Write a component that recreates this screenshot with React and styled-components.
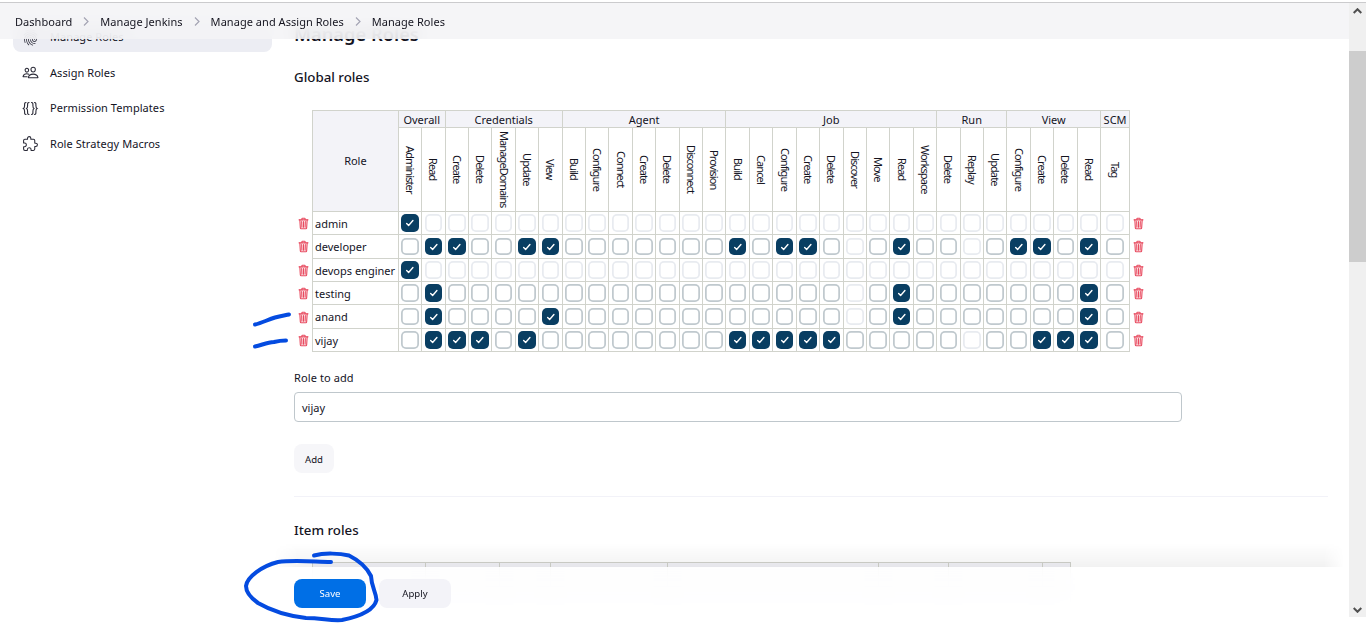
import React from 'react';
import styled, { createGlobalStyle } from 'styled-components';
import {
  IoFingerPrintOutline,
  IoPeopleOutline,
  IoExtensionPuzzleOutline,
  IoTrashOutline,
} from 'react-icons/io5';

const GlobalStyle = createGlobalStyle`
  * { box-sizing: border-box; }
  html, body { margin: 0; padding: 0; background: #fff; }
  body {
    font-family: 'Noto Sans', 'Open Sans', sans-serif;
    font-size: 11px;
    color: #14141f;
    overflow: hidden;
  }
`;

const Screen = styled.div`
  position: relative;
  width: 1366px;
  height: 623px;
  overflow: hidden;
  background: #fff;
`;

const Viewport = styled.div`
  display: flex;
  height: 617px;
  overflow: hidden;
`;

const Header = styled.header`
  position: absolute;
  z-index: 2;
  top: 0;
  left: 0;
  width: 1349px;
  height: 39px;
  padding: 5px 0 0 15px;
  display: flex;
  align-items: center;
  background: rgba(243, 243, 246, 0.86);
  backdrop-filter: blur(8px);
`;

const TopEdge = styled.div`
  position: absolute;
  z-index: 3;
  top: 0;
  left: 0;
  width: 100%;
  height: 3px;
  background: #fff;
  border-bottom: 1px solid #cbcbcd;
`;

const Crumb = styled.span`
  line-height: 16px;
  letter-spacing: 0.04px;
  white-space: nowrap;
`;

const Chevron = styled.svg`
  width: 6px;
  height: 9px;
  margin: -1px 11px 0;
  fill: none;
  stroke: #a4a4b4;
  stroke-width: 1.2;
`;

const Sidebar = styled.nav`
  flex: none;
  width: 294px;
  padding: 20px 22px 0 13px;
  display: flex;
  flex-direction: column;
  gap: 3.6px;
`;

const SideItem = styled.a`
  display: flex;
  align-items: center;
  height: 32px;
  padding: 2px 0 0 9px;
  gap: 11px;
  border-radius: 8px;
  background: ${(p) => (p.$active ? '#ecedf3' : 'transparent')};
  line-height: 16px;
  letter-spacing: 0.06px;

  svg { width: 17px; height: 17px; color: #2b2b38; flex: none; }
`;

const Content = styled.main`
  flex: none;
  width: 1034px;
`;

const PageTitle = styled.h1`
  margin: 0;
  padding-top: 21px;
  height: 66px;
  font-size: 18.3px;
  line-height: 26px;
  font-weight: 600;
`;

const SectionTitle = styled.h2`
  margin: 0;
  font-size: 13.3px;
  line-height: 22px;
  font-weight: 500;
`;

const RoleGrid = styled.div`
  display: grid;
  grid-template-columns: 18px 85.8px repeat(30, 23.41px) 29.2px 18px;
  grid-template-rows: 17px 83.8px repeat(5, 23.41px) 24.2px;
  margin-top: 22px;
`;

const Cell = styled.div`
  display: flex;
  align-items: center;
  justify-content: center;
  border-left: 1px solid #d1d3cc;
  border-top: 1px solid #d1d3cc;
  background: ${(p) => (p.$head ? '#f3f3f8' : 'transparent')};
  grid-column: ${(p) => p.$col || 'auto'};
  grid-row: ${(p) => p.$row || 'auto'};
  border-bottom: ${(p) => (p.$last ? '1px solid #d1d3cc' : 'none')};
  line-height: 14px;
  white-space: nowrap;
  min-width: 0;
  min-height: 0;
`;

const GroupCell = styled(Cell)`
  padding-top: 2px;
`;

const NameCell = styled(Cell)`
  justify-content: flex-start;
  padding: 1.500px 0 0 2px;
`;

const BoxCell = styled(Cell)`
  align-items: flex-start;
  padding-top: 2.4px;
`;

const VerticalLabel = styled.span`
  writing-mode: vertical-rl;
  letter-spacing: -0.9px;
  line-height: 14px;
`;

const TrashCell = styled.div`
  display: flex;
  align-items: center;
  justify-content: center;
  grid-column: ${(p) => p.$col};
  grid-row: ${(p) => p.$row};
  border-left: ${(p) => (p.$edge ? '1px solid #d1d3cc' : 'none')};
  padding-top: 2px;
  svg { width: 13px; height: 13px; color: #e84a5f; }
  svg * { stroke-width: 44px; }
`;

const RightEdge = styled.div`
  grid-column: 34;
  grid-row: 1 / 3;
  border-left: 1px solid #d1d3cc;
`;

const Checkbox = styled.span`
  display: block;
  width: 17.6px;
  height: 17.6px;
  border-radius: 5px;
  background: ${(p) => (p.$on ? '#093e62' : '#fff')};
  box-shadow: ${(p) =>
    p.$on ? 'none' : `inset 0 0 0 1.75px ${p.$dim ? '#e8ebf0' : '#c0c9ce'}`};
  svg { display: block; width: 100%; height: 100%; }
`;

const FieldLabel = styled.label`
  display: block;
  margin-top: 18px;
  line-height: 16px;
  letter-spacing: 0.1px;
`;

const Field = styled.div`
  width: 888px;
  height: 30px;
  margin-top: 6px;
  padding: 1px 0 0 7px;
  border: 1px solid #bfc7cc;
  border-radius: 4px;
  display: flex;
  align-items: center;
`;

const Button = styled.button`
  width: ${(p) => p.$w};
  height: 28.5px;
  padding: ${(p) => (p.$soft ? '2px' : '1px')} 0 0;
  border: 0;
  border-radius: 8px;
  font: 9.6px 'Noto Sans', sans-serif;
  background: ${(p) => (p.$primary ? '#006fe6' : p.$soft ? '#f6f6f9' : '#f3f3f8')};
  color: ${(p) => (p.$primary ? '#fff' : '#14141f')};
`;

const Divider = styled.hr`
  margin: 23px 0 22px;
  border: 0;
  height: 1px;
  background: #f2f2f8;
`;

const AddRow = styled.div`
  margin-top: 22px;
  height: 29px;
`;

const ItemGrid = styled.div`
  display: grid;
  grid-template-columns: 113px 74px 51px 117px 211px 70px 94px 28px;
  width: 759px;
  height: 40px;
  margin: 21px 0 0 18px;
  border-right: 1px solid #d1d3cc;
`;

const BottomBar = styled.footer`
  position: absolute;
  z-index: 2;
  left: 278px;
  top: 567px;
  width: 1071px;
  height: 50px;
  padding: 12px 16px;
  display: flex;
  gap: 13px;
  background: rgba(255, 255, 255, 0.85);
  backdrop-filter: blur(10px);
`;

const BarShadow = styled.div`
  position: absolute;
  z-index: 1;
  left: 274px;
  top: 543px;
  width: 1070px;
  height: 24px;
  background: linear-gradient(to bottom, rgba(0, 0, 0, 0), rgba(0, 0, 0, 0.05));
  mask-image: linear-gradient(to right, transparent, #000 24px, #000 1050px, transparent);
`;

const Scrollbar = styled.div`
  position: absolute;
  z-index: 2;
  top: 3px;
  right: 0;
  width: 17px;
  height: 614px;
  padding: 5px 0 4px;
  display: flex;
  flex-direction: column;
  justify-content: space-between;
  align-items: center;
  background: #f0f0f0;
  svg { width: 9px; height: 6px; fill: none; stroke: #505050; stroke-width: 2; }
`;

const Thumb = styled.div`
  width: 17px;
  height: 211px;
  margin: 37px 0 auto;
  background: #cdcdcd;
`;

const Ink = styled.svg`
  position: absolute;
  z-index: 4;
  left: 0;
  top: 0;
  width: 400px;
  height: 623px;
  fill: none;
  stroke: #044be0;
  stroke-width: 4;
  stroke-linecap: round;
  stroke-linejoin: round;
  pointer-events: none;
`;

const GROUPS = [
  ['Overall', ['Administer', 'Read']],
  ['Credentials', ['Create', 'Delete', 'ManageDomains', 'Update', 'View']],
  ['Agent', ['Build', 'Configure', 'Connect', 'Create', 'Delete', 'Disconnect', 'Provision']],
  ['Job', ['Build', 'Cancel', 'Configure', 'Create', 'Delete', 'Discover', 'Move', 'Read', 'Workspace']],
  ['Run', ['Delete', 'Replay', 'Update']],
  ['View', ['Configure', 'Create', 'Delete', 'Read']],
  ['SCM', ['Tag']],
];

const PERMISSIONS = GROUPS.flatMap(([, names]) => names);

const ROLES = [
  { name: 'admin', on: [0], allDim: true },
  { name: 'developer', on: [1, 2, 5, 6, 14, 16, 17, 21, 26, 27, 29], dim: [19, 24] },
  { name: 'devops enginer', on: [0], allDim: true },
  { name: 'testing', on: [1, 21, 29], dim: [19] },
  { name: 'anand', on: [1, 6, 21, 29], dim: [19] },
  { name: 'vijay', on: [1, 2, 3, 5, 14, 15, 16, 17, 18, 27, 28, 29], dim: [24] },
];

const CRUMBS = ['Dashboard', 'Manage Jenkins', 'Manage and Assign Roles', 'Manage Roles'];

const BracesIcon = () => (
  <svg viewBox="0 0 17 17" fill="none" stroke="currentColor" strokeWidth="1.1" strokeLinecap="round">
    <path d="M4 2.500C2.400 2.500 2.600 4 2.600 5.500S2.400 8 1.400 8.500C2.400 9 2.600 10 2.600 11.500S2.400 14.500 4 14.500" />
    <path d="M7 2.500C5.400 2.500 5.600 4 5.600 5.500S5.400 8 4.600 8.500C5.400 9 5.600 10 5.600 11.500S5.400 14.500 7 14.500" />
    <path d="M9.500 2.500C11.100 2.500 10.900 4 10.900 5.500S11.100 8 11.900 8.500C11.100 9 10.900 10 10.900 11.500S11.100 14.500 9.500 14.500" />
    <path d="M12.500 2.500C14.100 2.500 13.900 4 13.900 5.500S14.100 8 15.100 8.500C14.100 9 13.900 10 13.900 11.500S14.100 14.500 12.500 14.500" />
  </svg>
);

const Check = () => (
  <svg viewBox="0 0 18 18" fill="none" stroke="#fff" strokeWidth="1.4" strokeLinecap="round" strokeLinejoin="round">
    <path d="M5.800 9.700l2 2 4.400-5" />
  </svg>
);

function GlobalRoles() {
  let start = 3;
  return (
    <RoleGrid>
      <Cell $head $col="2" $row="1 / 3">Role</Cell>
      {GROUPS.map(([label, names]) => {
        const col = `${start} / span ${names.length}`;
        start += names.length;
        return <GroupCell key={label} $head $col={col} $row="1">{label}</GroupCell>;
      })}
      {PERMISSIONS.map((label, i) => (
        <Cell key={i} $col={i + 3} $row="2"><VerticalLabel>{label}</VerticalLabel></Cell>
      ))}
      <RightEdge />
      {ROLES.map((role, r) => {
        const row = r + 3;
        const last = r === ROLES.length - 1;
        return (
          <React.Fragment key={role.name}>
            <TrashCell $col="1" $row={row}><IoTrashOutline /></TrashCell>
            <NameCell $col="2" $row={row} $last={last}>{role.name}</NameCell>
            {PERMISSIONS.map((_, i) => {
              const on = role.on.includes(i);
              return (
                <BoxCell key={i} $col={i + 3} $row={row} $last={last}>
                  <Checkbox $on={on} $dim={role.allDim || role.dim?.includes(i)}>
                    {on && <Check />}
                  </Checkbox>
                </BoxCell>
              );
            })}
            <TrashCell $col="34" $row={row} $edge><IoTrashOutline /></TrashCell>
          </React.Fragment>
        );
      })}
    </RoleGrid>
  );
}

export default function App() {
  return (
    <Screen>
      <GlobalStyle />
      <TopEdge />
      <Header>
        {CRUMBS.map((c, i) => (
          <React.Fragment key={c}>
            {i > 0 && <Chevron viewBox="0 0 6 9"><path d="M1 0.500l4 4-4 4" /></Chevron>}
            <Crumb>{c}</Crumb>
          </React.Fragment>
        ))}
      </Header>
      <Viewport>
        <Sidebar>
          <SideItem $active><IoFingerPrintOutline />Manage Roles</SideItem>
          <SideItem><IoPeopleOutline />Assign Roles</SideItem>
          <SideItem><BracesIcon />Permission Templates</SideItem>
          <SideItem><IoExtensionPuzzleOutline />Role Strategy Macros</SideItem>
        </Sidebar>
        <Content>
          <PageTitle>Manage Roles</PageTitle>
          <SectionTitle>Global roles</SectionTitle>
          <GlobalRoles />
          <FieldLabel>Role to add</FieldLabel>
          <Field>vijay</Field>
          <AddRow><Button $soft $w="40px">Add</Button></AddRow>
          <Divider />
          <SectionTitle>Item roles</SectionTitle>
          <ItemGrid>
            {Array.from({ length: 8 }, (_, i) => <Cell key={i} $head />)}
          </ItemGrid>
        </Content>
      </Viewport>
      <BarShadow />
      <BottomBar>
        <Button $primary $w="72px">Save</Button>
        <Button $w="72px">Apply</Button>
      </BottomBar>
      <Scrollbar>
        <svg viewBox="0 0 9 6"><path d="M0.700 5l3.800-3.800L8.300 5" /></svg>
        <Thumb />
        <svg viewBox="0 0 9 6"><path d="M0.700 1l3.800 3.800L8.300 1" /></svg>
      </Scrollbar>
      <Ink viewBox="0 0 400 623">
        <path d="M255 324.500C262 323 268 319.500 275 317.500C280 316 284 315.500 289 314.500" />
        <path d="M255 346.500C262 345 267 342.500 274 342C278 341 281 340.500 286 340.500" />
        <path d="M314 555.500C325 552.500 340 553.500 349 555.500C358 560 367 568 371 576C371.500 587 376 592 376.500 600C374 610 362 616 342 620C330 621 322 618 306 618C289 616 270 610 258 603C251 598 246 592 246 586C247 577 262 566 278 562C293 560 310 561.500 331 562" />
      </Ink>
    </Screen>
  );
}
